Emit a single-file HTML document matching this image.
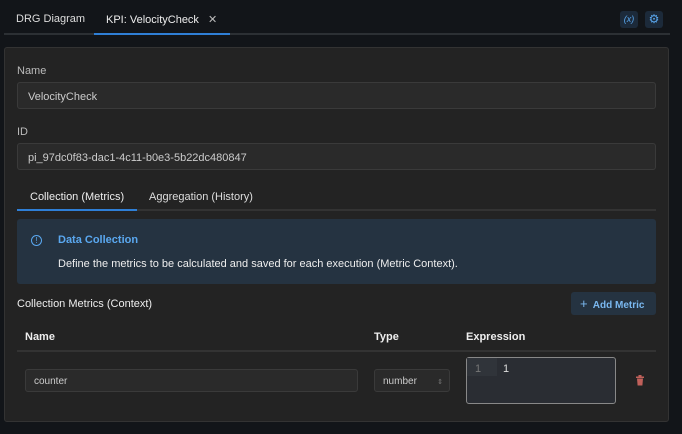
<!DOCTYPE html>
<html><head><style>
*{box-sizing:border-box;margin:0;padding:0}
body{width:682px;height:434px;background:#121519;font-family:"Liberation Sans",sans-serif;font-size:11px;color:#ddd;position:relative;overflow:hidden}
.a{position:absolute}
.inp{position:absolute;background:#2a2a2a;border:1px solid #3a3a3a;border-radius:3px;color:#ccc;padding-left:10px;display:flex;align-items:center}
</style></head><body>
<div class="a" style="left:16px;top:13px;color:#ddd">DRG Diagram</div>
<div class="a" style="left:106px;top:13px;color:#eee">KPI: VelocityCheck <span style="margin-left:6px;color:#bbb">✕</span></div>
<div class="a" style="left:4px;top:33px;width:666px;height:2px;background:#2c3034"></div>
<div class="a" style="left:94px;top:33px;width:136px;height:2px;background:#2f7fd6"></div>
<div class="a" style="left:620px;top:11px;width:18px;height:17px;background:#1c2a3a;border-radius:3px;color:#5aa8f0;font-size:9px;text-align:center;line-height:17px;font-style:italic">(x)</div>
<div class="a" style="left:645px;top:11px;width:18px;height:17px;background:#1c2a3a;border-radius:3px;color:#5aa8f0;font-size:12px;text-align:center;line-height:17px">⚙</div>
<div class="a" style="left:4px;top:47px;width:665px;height:375px;background:#232323;border:1px solid #333;border-radius:3px"></div>
<div class="a" style="left:17px;top:65px;color:#bbb">Name</div>
<div class="inp" style="left:17px;top:82px;width:639px;height:27px;padding-top:2px">VelocityCheck</div>
<div class="a" style="left:17px;top:126px;color:#bbb">ID</div>
<div class="inp" style="left:17px;top:143px;width:639px;height:27px;padding-top:2px">pi_97dc0f83-dac1-4c11-b0e3-5b22dc480847</div>
<div class="a" style="left:30px;top:191px;color:#eee">Collection (Metrics)</div>
<div class="a" style="left:149px;top:191px;color:#ddd">Aggregation (History)</div>
<div class="a" style="left:17px;top:209px;width:639px;height:2px;background:#333"></div>
<div class="a" style="left:17px;top:209px;width:120px;height:2px;background:#2f7fd6"></div>
<div class="a" style="left:17px;top:219px;width:639px;height:65px;background:#253341;border-radius:3px"></div>
<div class="a" style="left:31px;top:235px;width:11px;height:11px;border:1px solid #5aa8f0;border-radius:50%;color:#5aa8f0;font-size:8px;text-align:center;line-height:9px">!</div>
<div class="a" style="left:58px;top:234px;color:#5aa8f0;font-weight:bold">Data Collection</div>
<div class="a" style="left:58px;top:258px;color:#eee">Define the metrics to be calculated and saved for each execution (Metric Context).</div>
<div class="a" style="left:17px;top:298px;color:#eee">Collection Metrics (Context)</div>
<div class="a" style="left:571px;top:292px;width:85px;height:23px;background:#253341;border-radius:3px;color:#7ab8f0;font-size:10px;font-weight:bold;line-height:23px;padding-left:9px"><span style="font-weight:normal;font-size:13px">+</span>&nbsp; Add Metric</div>
<div class="a" style="left:25px;top:331px;font-weight:bold;color:#eee">Name</div>
<div class="a" style="left:374px;top:331px;font-weight:bold;color:#eee">Type</div>
<div class="a" style="left:466px;top:331px;font-weight:bold;color:#eee">Expression</div>
<div class="a" style="left:17px;top:350px;width:639px;height:2px;background:#333"></div>
<div class="inp" style="left:25px;top:369px;width:333px;height:23px;font-size:10px;padding-left:8px;padding-top:2px">counter</div>
<div class="inp" style="left:374px;top:369px;width:76px;height:23px;font-size:10px;padding-left:8px;padding-top:2px">number<span style="position:absolute;right:6px;color:#777;font-size:7px">⇕</span></div>
<div class="a" style="left:466px;top:357px;width:150px;height:47px;background:#2a2d33;border:1px solid #888;border-radius:3px"></div>
<div class="a" style="left:467px;top:358px;width:30px;height:18px;background:#30343a"></div>
<div class="a" style="left:475px;top:363px;color:#777">1</div>
<div class="a" style="left:503px;top:363px;color:#ddd">1</div>
<svg class="a" style="left:635px;top:375px" width="10" height="11" viewBox="0 0 10 11"><rect x="1" y="1.5" width="8" height="1.5" fill="#c0605a"/><rect x="3.5" y="0" width="3" height="1.5" fill="#c0605a"/><path d="M2 3.5h6l-.6 7H2.6z" fill="#c0605a"/></svg>
</body></html>
